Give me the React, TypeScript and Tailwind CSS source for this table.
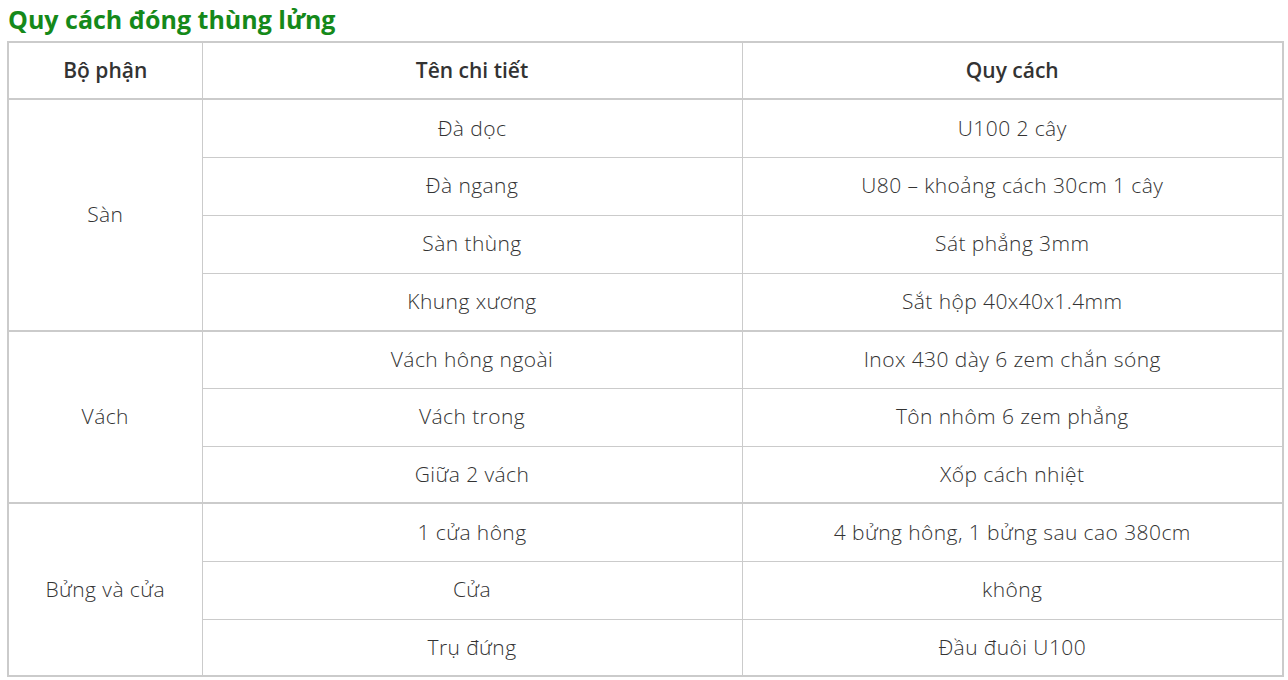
const groups = [
  {
    name: 'Sàn',
    rows: [
      ['Đà dọc', 'U100 2 cây'],
      ['Đà ngang', 'U80 – khoảng cách 30cm 1 cây'],
      ['Sàn thùng', 'Sát phẳng 3mm'],
      ['Khung xương', 'Sắt hộp 40x40x1.4mm'],
    ],
  },
  {
    name: 'Vách',
    rows: [
      ['Vách hông ngoài', 'Inox 430 dày 6 zem chắn sóng'],
      ['Vách trong', 'Tôn nhôm 6 zem phẳng'],
      ['Giữa 2 vách', 'Xốp cách nhiệt'],
    ],
  },
  {
    name: 'Bửng và cửa',
    rows: [
      ['1 cửa hông', '4 bửng hông, 1 bửng sau cao 380cm'],
      ['Cửa', 'không'],
      ['Trụ đứng', 'Đầu đuôi U100'],
    ],
  },
];

// row heights tuned to the screenshot (some rows are a pixel shorter)
const short = ['Vách hông ngoài', 'Giữa 2 vách', 'Trụ đứng'];

export default function App() {
  return (
    <div className="bg-white w-[1288px] h-[680px] overflow-hidden font-['Open_Sans',sans-serif] text-[#333]">
      <h2 className="pl-[8px] pt-[2px] h-[41px] text-[25px] leading-[34px] font-bold text-[#15891a]">
        Quy cách đóng thùng lửng
      </h2>
      <table className="ml-[7px] w-[1275px] border-collapse border-2 border-[#cbcbcb] table-fixed text-[21px] tracking-[0.02em]">
        <colgroup>
          <col className="w-[194px]" />
          <col className="w-[540px]" />
          <col className="w-[541px]" />
        </colgroup>
        <thead>
          <tr className="h-[57px]">
            <th className="border border-[#cbcbcb] font-semibold text-[21px] tracking-normal">Bộ phận</th>
            <th className="border border-[#cbcbcb] font-semibold text-[21px] tracking-normal">Tên chi tiết</th>
            <th className="border border-[#cbcbcb] font-semibold text-[21px] tracking-normal">Quy cách</th>
          </tr>
        </thead>
        <tbody>
          {groups.map((g) =>
            g.rows.map((r, i) => (
              <tr
                key={g.name + i}
                className={`${short.includes(r[0]) ? 'h-[57px]' : 'h-[58px]'} ${i === 0 ? 'border-t-2 border-[#cbcbcb]' : ''}`}
              >
                {i === 0 && (
                  <td rowSpan={g.rows.length} className="border border-[#cbcbcb] text-center font-light">
                    {g.name}
                  </td>
                )}
                <td className="border border-[#cbcbcb] text-center font-light">{r[0]}</td>
                <td className="border border-[#cbcbcb] text-center font-light">{r[1]}</td>
              </tr>
            ))
          )}
        </tbody>
      </table>
    </div>
  );
}
